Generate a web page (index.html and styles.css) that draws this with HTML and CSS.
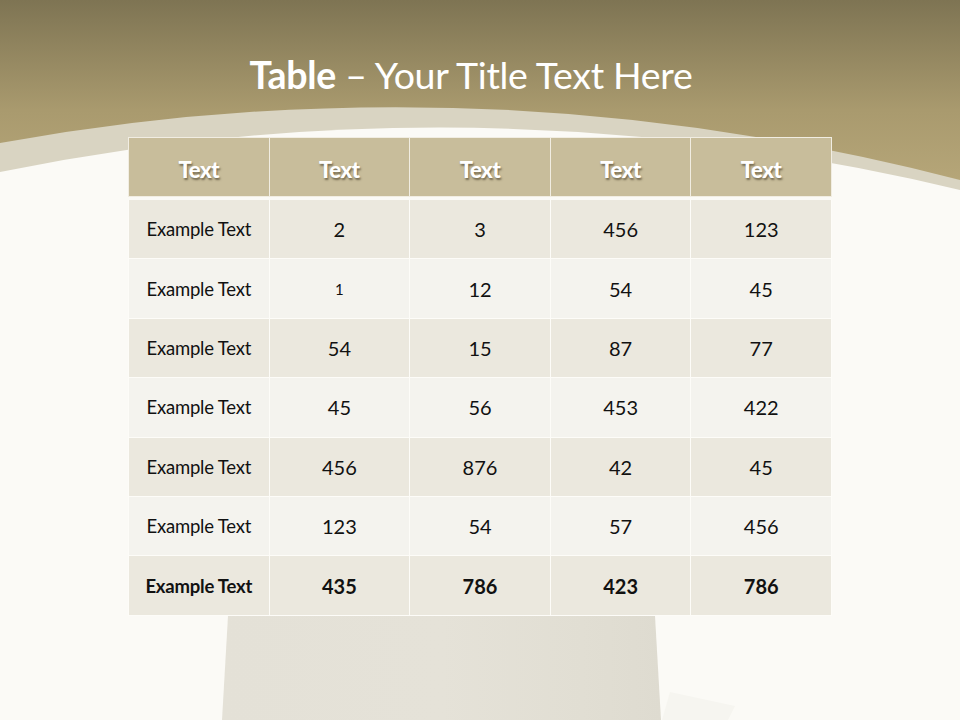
FILE: index.html
```html
<!DOCTYPE html>
<html>
<head>
<meta charset="utf-8">
<link rel="stylesheet" href="styles.css">
</head>
<body>
<div class="slide">
  <svg class="bg" width="960" height="720" viewBox="0 0 960 720" aria-hidden="true">
    <defs>
      <linearGradient id="top" x1="0" y1="0" x2="0" y2="1">
        <stop offset="0" stop-color="#7e7453"/>
        <stop offset="0.55" stop-color="#a99a6e"/>
        <stop offset="1" stop-color="#b9a97b"/>
      </linearGradient>
      <linearGradient id="ped" x1="0" y1="0" x2="1" y2="0">
        <stop offset="0" stop-color="#e4e1d7"/>
        <stop offset="0.5" stop-color="#e5e2d8"/>
        <stop offset="0.82" stop-color="#e1ded3"/>
        <stop offset="1" stop-color="#dedbd0"/>
      </linearGradient>
    </defs>
    <rect x="0" y="0" width="960" height="720" fill="#fbfaf6"/>
    <rect x="0" y="0" width="960" height="200" fill="url(#top)"/>
    <path d="M0,143 Q480,56 960,180 L960,720 L0,720 Z" fill="#d9d4c2"/>
    <path d="M0,172 Q480,75 960,190 L960,720 L0,720 Z" fill="#fbfaf6"/>
    <path d="M670,692 L735,706 L728,720 L662,720 Z" fill="#f6f5f0"/>
    <path d="M228,616 L655,616 L661,720 L222,720 Z" fill="url(#ped)"/>
  </svg>
  <div class="content">
    <h1 class="title"><b>Table</b> – Your Title Text Here</h1>
    <div class="table">
      <div class="head">
        <div class="hc">Text</div>
        <div class="hc">Text</div>
        <div class="hc">Text</div>
        <div class="hc">Text</div>
        <div class="hc">Text</div>
      </div>
      <div class="body">
        <div class="c odd lab">Example Text</div><div class="c odd">2</div><div class="c odd">3</div><div class="c odd">456</div><div class="c odd">123</div>
        <div class="c even lab">Example Text</div><div class="c even small">1</div><div class="c even">12</div><div class="c even">54</div><div class="c even">45</div>
        <div class="c odd lab">Example Text</div><div class="c odd">54</div><div class="c odd">15</div><div class="c odd">87</div><div class="c odd">77</div>
        <div class="c even lab">Example Text</div><div class="c even">45</div><div class="c even">56</div><div class="c even">453</div><div class="c even">422</div>
        <div class="c odd lab">Example Text</div><div class="c odd">456</div><div class="c odd">876</div><div class="c odd">42</div><div class="c odd">45</div>
        <div class="c even lab">Example Text</div><div class="c even">123</div><div class="c even">54</div><div class="c even">57</div><div class="c even">456</div>
        <div class="c odd lab bold">Example Text</div><div class="c odd bold">435</div><div class="c odd bold">786</div><div class="c odd bold">423</div><div class="c odd bold">786</div>
      </div>
    </div>
  </div>
</div>
</body>
</html>
```

FILE: styles.css
```css
html, body {
  margin: 0;
  padding: 0;
}
body {
  width: 960px;
  height: 720px;
  overflow: hidden;
  font-family: Lato, "Open Sans", sans-serif;
}
.slide {
  position: relative;
  width: 960px;
  height: 720px;
}
.bg {
  position: absolute;
  left: 0;
  top: 0;
}
.content {
  position: relative;
  display: flex;
  flex-direction: column;
  align-items: center;
}
.title {
  margin: 50px 18px 0 0;
  height: 50px;
  line-height: 50px;
  font-size: 37.5px;
  font-weight: 400;
  color: #ffffff;
  letter-spacing: -0.3px;
}
.title b {
  font-weight: 700;
}
.table {
  margin-top: 37px;
  width: 704px;
  display: flex;
  flex-direction: column;
  gap: 3px;
}
.head {
  display: grid;
  grid-template-columns: repeat(5, 1fr);
  gap: 1px;
  background: #f1ede2;
  padding: 1px;
  height: 60px;
  box-sizing: border-box;
}
.hc {
  background: #c8bd9b;
  display: flex;
  align-items: center;
  justify-content: center;
  padding-top: 4px;
  color: #fff;
  font-weight: 900;
  font-size: 22px;
  letter-spacing: -0.4px;
  text-shadow: 1px 2px 2px rgba(60, 50, 30, 0.6);
}
.body {
  display: grid;
  grid-template-columns: repeat(5, 1fr);
  grid-auto-rows: 58.4px;
  gap: 1px;
  background: #fdfcf8;
  padding: 0 1px 1px 1px;
}
.c {
  display: flex;
  align-items: center;
  justify-content: center;
  color: #111;
  font-size: 20px;
}
.odd {
  background: #ebe8de;
}
.even {
  background: #f4f3ee;
}
.lab {
  font-size: 18.5px;
  letter-spacing: -0.2px;
}
.small {
  font-size: 15px;
}
.bold {
  font-weight: 700;
}
```
